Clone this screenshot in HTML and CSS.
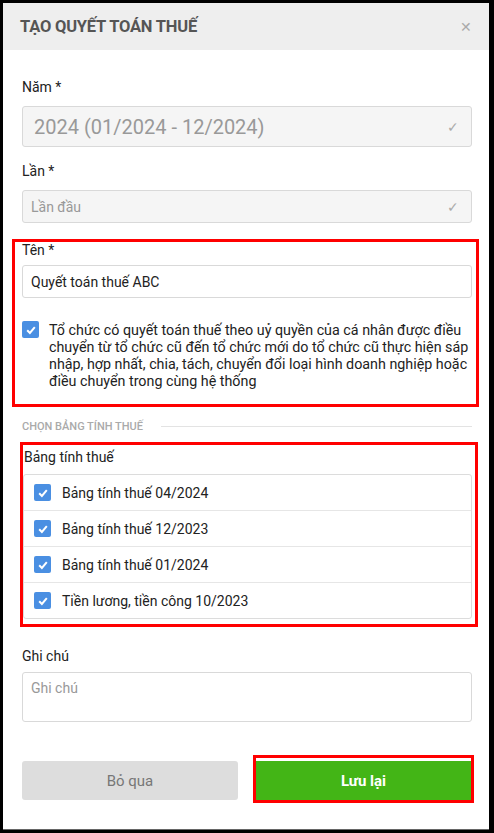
FILE: index.html
```html
<!DOCTYPE html>
<html lang="vi">
<head>
<meta charset="utf-8">
<title>Tạo quyết toán thuế</title>
<link rel="stylesheet" href="styles.css">
</head>
<body>
<div class="modal">
  <div class="modal-header">
    <h1 class="modal-title">TẠO QUYẾT TOÁN THUẾ</h1>
    <span class="close">&#x2715;</span>
  </div>
  <div class="modal-body">
    <div class="field">
      <label class="label">Năm *</label>
      <div class="input input-lg disabled"><span>2024 (01/2024 - 12/2024)</span><span class="tick">&#x2713;</span></div>
    </div>
    <div class="field field-lan">
      <label class="label">Lần *</label>
      <div class="input disabled"><span>Lần đầu</span><span class="tick">&#x2713;</span></div>
    </div>
    <div class="hl hl-name">
      <label class="label">Tên *</label>
      <div class="input"><span class="value">Quyết toán thuế ABC</span></div>
      <div class="check-row">
        <span class="cb"><svg viewBox="0 0 16 16" width="16" height="16"><path d="M4.2 8.3 L6.9 11 L11.8 5.2" fill="none" stroke="#fff" stroke-width="2"/></svg></span>
        <span class="check-text">Tổ chức có quyết toán thuế theo uỷ quyền của cá nhân được điều chuyển từ tổ chức cũ đến tổ chức mới do tổ chức cũ thực hiện sáp nhập, hợp nhất, chia, tách, chuyển đổi loại hình doanh nghiệp hoặc điều chuyển trong cùng hệ thống</span>
      </div>
    </div>
    <div class="section">
      <span class="section-title">CHỌN BẢNG TÍNH THUẾ</span>
      <span class="section-line"></span>
    </div>
    <div class="hl hl-list">
      <label class="label">Bảng tính thuế</label>
      <div class="list">
        <div class="list-row"><span class="cb"><svg viewBox="0 0 16 16" width="16" height="16"><path d="M4.2 8.3 L6.9 11 L11.8 5.2" fill="none" stroke="#fff" stroke-width="2"/></svg></span><span>Bảng tính thuế 04/2024</span></div>
        <div class="list-row"><span class="cb"><svg viewBox="0 0 16 16" width="16" height="16"><path d="M4.2 8.3 L6.9 11 L11.8 5.2" fill="none" stroke="#fff" stroke-width="2"/></svg></span><span>Bảng tính thuế 12/2023</span></div>
        <div class="list-row"><span class="cb"><svg viewBox="0 0 16 16" width="16" height="16"><path d="M4.2 8.3 L6.9 11 L11.8 5.2" fill="none" stroke="#fff" stroke-width="2"/></svg></span><span>Bảng tính thuế 01/2024</span></div>
        <div class="list-row"><span class="cb"><svg viewBox="0 0 16 16" width="16" height="16"><path d="M4.2 8.3 L6.9 11 L11.8 5.2" fill="none" stroke="#fff" stroke-width="2"/></svg></span><span>Tiền lương, tiền công 10/2023</span></div>
      </div>
    </div>
    <div class="field field-note">
      <label class="label">Ghi chú</label>
      <div class="textarea"><span class="placeholder">Ghi chú</span></div>
    </div>
    <div class="actions">
      <button class="btn btn-cancel">Bỏ qua</button>
      <div class="hl hl-btn"><button class="btn btn-save">Lưu lại</button></div>
    </div>
  </div>
</div>
</body>
</html>
```

FILE: styles.css
```css
* { box-sizing: border-box; }
html, body { margin: 0; padding: 0; }
body {
  background: #000;
  font-family: Roboto, "Liberation Sans", Arial, sans-serif;
  color: #333;
  width: 494px;
  height: 833px;
  overflow: hidden;
}
.modal {
  margin: 3px 0 0 3px;
  width: 486px;
  height: 827px;
  background: #fff;
  border-bottom: 1px solid #666;
}
.modal-header {
  height: 47px;
  background: #eeeeee;
  display: flex;
  align-items: center;
  justify-content: space-between;
  padding: 0 17px 0 17px;
}
.modal-title {
  margin: 0;
  font-size: 16.5px;
  font-weight: 700;
  color: #555;
  letter-spacing: -0.2px;
}
.close {
  color: #aaa;
  font-size: 14px;
}
.modal-body {
  padding: 29px 17px 0 19px;
}
.field { display: flex; flex-direction: column; }
.label {
  display: block;
  font-size: 14px;
  line-height: 17px;
  color: #222;
  margin-bottom: 10px;
}
.input {
  height: 33px;
  border: 1px solid #d9d9d9;
  border-radius: 3px;
  display: flex;
  align-items: center;
  justify-content: space-between;
  padding: 0 12px 0 8px;
  font-size: 14px;
  color: #222;
  background: #fff;
}
.input.disabled { background: #f5f5f5; color: #999; }
.input-lg { height: 41px; font-size: 20px; padding-left: 11px; }
.tick { color: #aaa; font-size: 14px; }
.field-lan { margin-top: 16px; }
.hl {
  border: 3px solid #ff0000;
}
.hl-name {
  margin: 16px -7px 0 -10px;
  padding: 0 2px 14px 7px;
}
.hl-name .label { line-height: 16px; margin-bottom: 7px; }
.hl-name .input { margin-right: 2px; }
.check-row {
  display: flex;
  align-items: flex-start;
  gap: 10px;
  margin-top: 23px;
}
.cb {
  flex: none;
  width: 17px;
  height: 17px;
  border-radius: 2px;
  background: #4a8fe2;
  display: flex;
  align-items: center;
  justify-content: center;
}
.check-text {
  font-size: 14.3px;
  line-height: 17px;
  color: #222;
  margin-top: 1px;
}
.section {
  display: flex;
  align-items: center;
  gap: 18px;
  margin-top: 11px;
  height: 16px;
}
.section-title {
  font-size: 11px;
  color: #aaa;
  font-weight: 500;
  white-space: nowrap;
}
.section-line { flex: 1; height: 1px; background: #e3e3e3; }
.hl-list {
  margin: 8px -6px 0 -2px;
  padding: 4px 3px 5px 0;
}
.hl-list .label { margin-bottom: 8px; padding-left: 1px; }
.list {
  border: 1px solid #dcdcdc;
  border-radius: 3px;
}
.list-row {
  height: 36px;
  display: flex;
  align-items: center;
  gap: 11px;
  padding-left: 10px;
  font-size: 14px;
  color: #222;
  border-bottom: 1px solid #e6e6e6;
}
.list-row:last-child { border-bottom: none; height: 35px; }
.field-note { margin-top: 21px; }
.field-note .label { margin-bottom: 7px; }
.textarea {
  height: 50px;
  border: 1px solid #d9d9d9;
  border-radius: 3px;
  padding: 7px 8px;
  font-size: 14px;
}
.placeholder { color: #999; }
.actions {
  display: flex;
  align-items: flex-start;
  gap: 15px;
  margin-top: 33px;
}
.btn {
  height: 39px;
  border: none;
  border-radius: 3px;
  font-family: Roboto, "Liberation Sans", Arial, sans-serif;
  font-size: 15px;
}
.btn-cancel {
  flex: none;
  width: 216px;
  margin-top: 6px;
  background: #dddddd;
  color: #777;
}
.hl-btn {
  flex: none;
  width: 221px;
  padding: 3px 0 0 0;
}
.btn-save {
  width: 100%;
  display: block;
  background: #43b516;
  color: #fff;
  font-weight: 700;
  border-radius: 0;
}
```
